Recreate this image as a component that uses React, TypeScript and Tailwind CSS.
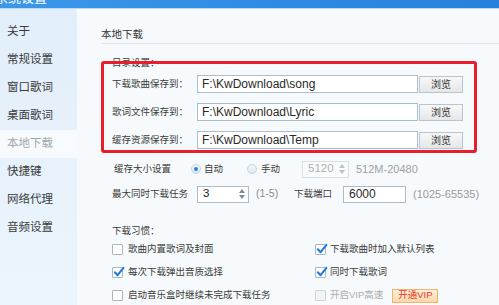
import React from 'react'

const menu = ['关于', '常规设置', '窗口歌词', '桌面歌词', '本地下载', '快捷键', '网络代理', '音频设置']

const paths = [
  { label: '下载歌曲保存到：', value: 'F:\\KwDownload\\song' },
  { label: '歌词文件保存到：', value: 'F:\\KwDownload\\Lyric' },
  { label: '缓存资源保存到：', value: 'F:\\KwDownload\\Temp' },
]

const Check = ({ checked, disabled }: { checked?: boolean; disabled?: boolean }) => (
  <span
    className={`relative inline-block h-[11px] w-[11px] shrink-0 rounded-[1px] border ${
      disabled ? 'border-[#cfd5db] bg-[#f1f3f5]' : 'border-[#a9b7c4] bg-white'
    }`}
  >
    {checked && (
      <svg className="absolute -top-[2px] left-[0px]" width="12" height="12" viewBox="0 0 12 12">
        <path d="M1.8 6.2 L4.6 9.2 L10.4 1.8" fill="none" stroke="#1f78d6" strokeWidth="2" strokeLinecap="round" strokeLinejoin="round" />
      </svg>
    )}
  </span>
)

const Radio = ({ on }: { on?: boolean }) => (
  <span className="flex h-[10px] w-[10px] shrink-0 items-center justify-center rounded-full border border-[#c3d3e2] bg-gradient-to-b from-[#f4f8fb] to-[#dfe8f0]">
    {on && <span className="h-[4px] w-[4px] rounded-full bg-[#2b82d9]" />}
  </span>
)

const Spin = ({ value, disabled, w }: { value: string; disabled?: boolean; w: string }) => (
  <div
    className={`flex h-[17px] items-center justify-between border pl-[5px] pr-[3px] ${w} ${
      disabled ? 'border-[#d7dee5] bg-[#fafbfc] text-[#b0b0b0]' : 'border-[#a9bcd0] bg-white text-[#222]'
    }`}
  >
    <span className="text-[11.5px] leading-none">{value}</span>
    <span className="flex flex-col gap-[2px]">
      <svg width="6" height="4" viewBox="0 0 6 4"><path d="M0 4 L3 0 L6 4Z" fill={disabled ? '#b9c2ca' : '#7d8a96'} /></svg>
      <svg width="6" height="4" viewBox="0 0 6 4"><path d="M0 0 L3 4 L6 0Z" fill={disabled ? '#b9c2ca' : '#7d8a96'} /></svg>
    </span>
  </div>
)

export default function App() {
  return (
    <div className="relative h-[305px] w-[499px] overflow-hidden font-['Liberation_Sans','Noto_Sans_CJK_SC',sans-serif] text-[#333]">
      <div className="h-[9px] overflow-hidden border-b border-[#b9d9f3] bg-gradient-to-r from-[#3b97ea] to-[#2482dc]">
        <div className="-ml-[5px] -mt-[10px] text-[13px] leading-[16px] text-white">系统设置</div>
      </div>

      <div className="flex h-[296px]">
        <aside className="w-[77px] shrink-0 bg-gradient-to-b from-[#e2eefa] to-[#ebf5fd] pt-[9px]">
          {menu.map((m) => (
            <div
              key={m}
              className={`flex h-[28px] items-center pl-[7px] text-[11.5px] ${
                m === '本地下载' ? 'bg-[#f8fbfe] text-[#a2a7ac]' : 'text-[#3a3a3a]'
              }`}
            >
              {m}
            </div>
          ))}
        </aside>

        <main className="relative flex-1 bg-[#f7fafd] pl-[24px]">
          <div className="mt-[18px] border-b border-[#e1e5e9] pb-[2px] text-[10.5px] leading-[14px] text-[#333]">本地下载</div>

          <div className="pl-[11px] text-[9.5px] text-[#3a3a3a]">
            <div className="mt-[12px] leading-[14px]">目录设置：</div>

            <div className="mt-[5px] flex flex-col gap-[10px]">
              {paths.map((p) => (
                <div key={p.label} className="flex h-[18px] items-center">
                  <span className="w-[85px] shrink-0">{p.label}</span>
                  <div className="flex h-[18px] w-[221px] items-center border border-[#a9bdd0] bg-white pl-[4px] text-[12px] text-[#2a2a2a]">
                    {p.value}
                  </div>
                  <button className="ml-[1px] flex h-[17px] w-[44px] items-center justify-center border border-[#b8c4cf] bg-gradient-to-b from-[#f8f8f8] to-[#e4e6e8] text-[10px] text-[#333]">
                    浏览
                  </button>
                </div>
              ))}
            </div>

            <div className="mt-[11px] flex h-[18px] items-center">
              <span className="ml-[2px] w-[77px] shrink-0">缓存大小设置</span>
              <Radio on />
              <span className="ml-[3px] w-[43px]">自动</span>
              <Radio />
              <span className="ml-[4px] w-[41px]">手动</span>
              <Spin value="5120" disabled w="w-[47px]" />
              <span className="ml-[7px] text-[11px] text-[#a0a0a0]">512M-20480</span>
            </div>

            <div className="mt-[7px] flex h-[18px] items-center">
              <span className="w-[85px] shrink-0">最大同时下载任务</span>
              <Spin value="3" w="w-[52px]" />
              <span className="ml-[7px] w-[38px] text-[10.5px] text-[#8a8a8a]">(1-5)</span>
              <span className="w-[49px]">下载端口</span>
              <div className="flex h-[17px] w-[63px] items-center border border-[#a9bdd0] bg-white pl-[5px] text-[12px] text-[#2a2a2a]">6000</div>
              <span className="ml-[7px] text-[11px] text-[#9a9a9a]">(1025-65535)</span>
            </div>

            <div className="mt-[21px] leading-[14px]">下载习惯：</div>

            <div className="grid grid-cols-[203px_1fr]">
              <div className="flex h-[23px] items-center gap-[5px]"><Check />歌曲内置歌词及封面</div>
              <div className="flex h-[23px] items-center gap-[4px]"><Check checked />下载歌曲时加入默认列表</div>
              <div className="flex h-[23px] items-center gap-[5px]"><Check checked />每次下载弹出音质选择</div>
              <div className="flex h-[23px] items-center gap-[4px]"><Check checked />同时下载歌词</div>
              <div className="flex h-[23px] items-center gap-[5px]"><Check />启动音乐盒时继续未完成下载任务</div>
              <div className="flex h-[23px] items-center gap-[4px] text-[#acacac]">
                <Check disabled />开启VIP高速
                <span className="ml-[5px] flex h-[14px] w-[46px] items-center justify-center border border-[#f2b36e] bg-gradient-to-b from-[#fff0d9] to-[#fcd9a9] text-[9.5px] text-[#e5372a]">
                  开通VIP
                </span>
              </div>
            </div>
          </div>

          <div className="pointer-events-none absolute left-[24px] top-[52px] h-[92px] w-[376px] rounded-[3px] border-[3px] border-[#e81e2b]" />
        </main>
      </div>
    </div>
  )
}
